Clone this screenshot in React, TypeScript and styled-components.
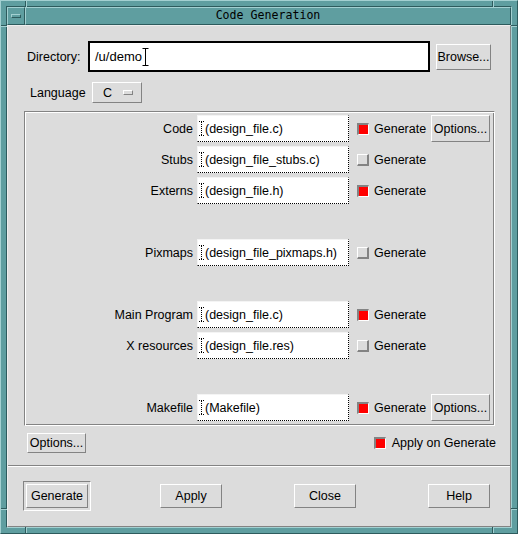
import styled, { createGlobalStyle, css } from "styled-components";

const TEAL = "#5f9ea0";
const TEAL_LIGHT = "#a3d0d1";
const TEAL_DARK = "#2d5b5d";
const FACE = "#dcdcdc";
const SHADE = "#838383";
const HILITE = "#ffffff";

const Global = createGlobalStyle`
  body {
    margin: 0;
    background: ${TEAL};
    font-family: "Liberation Sans", Arial, sans-serif;
    font-size: 12.5px;
    color: #000;
  }
`;

const raised = css`
  border-style: solid;
  border-width: 1px;
  border-color: ${HILITE} ${SHADE} ${SHADE} ${HILITE};
`;

const sunken = css`
  border-style: solid;
  border-width: 1px;
  border-color: ${SHADE} ${HILITE} ${HILITE} ${SHADE};
`;

/* ---------- window manager frame ---------- */

const Window = styled.div`
  position: relative;
  box-sizing: border-box;
  width: 518px;
  height: 534px;
  padding: 5px;
  background: ${TEAL};
  border: 1px solid;
  border-color: ${TEAL_LIGHT} ${TEAL_DARK} ${TEAL_DARK} ${TEAL_LIGHT};
  display: flex;
`;

const Inner = styled.div`
  flex: 1;
  display: flex;
  flex-direction: column;
  border: 1px solid;
  border-color: ${TEAL_DARK} ${TEAL_LIGHT} ${TEAL_LIGHT} ${TEAL_DARK};
`;

// resize-handle marks cut into the frame border
const Notch = styled.div<{ $side: "top" | "bottom" | "left" | "right"; $at: number }>`
  position: absolute;
  ${({ $side, $at }) =>
    $side === "top" || $side === "bottom"
      ? css`
          left: ${$at}px;
          ${$side}: 0;
          width: 2px;
          height: 6px;
          background: linear-gradient(to right, ${TEAL_DARK} 50%, ${TEAL_LIGHT} 50%);
        `
      : css`
          top: ${$at}px;
          ${$side}: 0;
          width: 6px;
          height: 2px;
          background: linear-gradient(to bottom, ${TEAL_DARK} 50%, ${TEAL_LIGHT} 50%);
        `}
`;

const TitleBar = styled.div`
  display: flex;
  height: 18px;
`;

const MenuButton = styled.div`
  box-sizing: border-box;
  width: 18px;
  border: 1px solid;
  border-color: ${TEAL_LIGHT} ${TEAL_DARK} ${TEAL_DARK} ${TEAL_LIGHT};
  display: flex;
  align-items: center;
  justify-content: center;
`;

const MenuBar = styled.div`
  box-sizing: border-box;
  width: 10px;
  height: 4px;
  margin-top: -1px;
  border: 1px solid;
  border-color: ${TEAL_LIGHT} ${TEAL_DARK} ${TEAL_DARK} ${TEAL_LIGHT};
`;

const Title = styled.div`
  flex: 1;
  box-sizing: border-box;
  border: 1px solid;
  border-color: ${TEAL_LIGHT} ${TEAL_DARK} ${TEAL_DARK} ${TEAL_LIGHT};
  display: flex;
  align-items: center;
  justify-content: center;
  font-family: "DejaVu Sans Mono", "Liberation Mono", monospace;
  font-size: 11.6px;
  line-height: 1;
`;

/* ---------- dialog body ---------- */

const Client = styled.div`
  flex: 1;
  display: flex;
  flex-direction: column;
  background: ${FACE};
  ${raised};
  border-color: #eeeeee ${SHADE} ${SHADE} #eeeeee;
`;

const Button = styled.button<{ $w: number; $h: number }>`
  box-sizing: border-box;
  width: ${({ $w }) => $w}px;
  height: ${({ $h }) => $h}px;
  padding: 0;
  margin: 0;
  background: ${FACE};
  ${raised};
  font: inherit;
  color: #000;
  display: flex;
  align-items: center;
  justify-content: center;
`;

const DirRow = styled.div`
  display: flex;
  align-items: center;
  height: 31px;
  margin-top: 15px;
  padding-left: 19px;
`;

const DirLabel = styled.span`
  width: 61px;
`;

const DirField = styled.div`
  box-sizing: border-box;
  width: 342px;
  height: 31px;
  margin-right: 6px;
  padding-left: 5px;
  background: #fff;
  border: 2px solid #000;
  display: flex;
  align-items: center;
  font-size: 13px;
`;

const LangRow = styled.div`
  display: flex;
  align-items: center;
  height: 21px;
  margin-top: 10px;
  padding-left: 22px;
`;

const LangLabel = styled.span`
  width: 62px;
`;

const OptionMenu = styled.div`
  box-sizing: border-box;
  width: 50px;
  height: 21px;
  padding-left: 10px;
  ${raised};
  display: flex;
  align-items: center;
  gap: 11px;
`;

const Indicator = styled.div`
  box-sizing: border-box;
  width: 10px;
  height: 5px;
  ${raised};
`;

const Frame = styled.div`
  box-sizing: border-box;
  width: 471px;
  height: 315px;
  margin: 8px 0 0 16px;
  padding: 3px 0 1px 0;
  border: 1px solid;
  border-color: ${SHADE} ${HILITE} ${HILITE} ${SHADE};
  box-shadow: inset 1px 1px 0 ${HILITE}, inset -1px -1px 0 ${SHADE};
  display: grid;
  grid-template-columns: 167px 152px 74px 59px;
  grid-template-rows: repeat(10, 27px);
  column-gap: 4px;
  row-gap: 4px;
  padding-left: 1px;
`;

const FileLabel = styled.span<{ $row: number }>`
  grid-column: 1;
  grid-row: ${({ $row }) => $row};
  align-self: center;
  justify-self: end;
`;

const FileField = styled.div<{ $row: number }>`
  grid-column: 2;
  grid-row: ${({ $row }) => $row};
  box-sizing: border-box;
  padding-left: 1px;
  background: #fff;
  border-style: solid dotted dotted solid;
  border-width: 1px;
  border-color: #f4f4f4 #000 #000 #f4f4f4;
  display: flex;
  align-items: center;
  gap: 0;
`;

const ToggleCell = styled.div<{ $row: number }>`
  grid-column: 3;
  grid-row: ${({ $row }) => $row};
  display: flex;
  align-items: center;
  gap: 5px;
  padding-left: 4px;
`;

const OptionsCell = styled.div<{ $row: number }>`
  grid-column: 4;
  grid-row: ${({ $row }) => $row};
`;

const Check = styled.span<{ $on: boolean }>`
  box-sizing: border-box;
  width: 12px;
  height: 12px;
  border-style: solid;
  border-width: 2px 1px 1px 2px;
  ${({ $on }) =>
    $on
      ? css`
          border-color: ${SHADE} ${HILITE} ${HILITE} ${SHADE};
          background: #ff0000;
        `
      : css`
          border-width: 1px 2px 2px 1px;
          border-color: ${HILITE} ${SHADE} ${SHADE} ${HILITE};
          background: ${FACE};
        `}
`;

const ExtraRow = styled.div`
  display: flex;
  align-items: center;
  justify-content: space-between;
  height: 20px;
  margin-top: 7px;
  padding: 0 14px 0 19px;
`;

const Toggle = styled.div`
  display: flex;
  align-items: center;
  gap: 6px;
`;

const Separator = styled.div`
  height: 0;
  margin-top: 12px;
  border-top: 1px solid ${SHADE};
  border-bottom: 1px solid ${HILITE};
`;

const ActionRow = styled.div`
  display: grid;
  grid-template-columns: repeat(4, 68px);
  column-gap: 66px;
  height: 30px;
  margin-top: 14px;
  padding-left: 15px;
`;

const Slot = styled.div`
  display: flex;
  align-items: center;
  justify-content: center;
`;

const DefaultRing = styled.div`
  box-sizing: border-box;
  width: 68px;
  height: 30px;
  ${sunken};
  display: flex;
  align-items: center;
  justify-content: center;
`;

const IdleCursor = () => (
  <svg width="6" height="15" viewBox="0 0 6 15" aria-hidden="true">
    <g stroke="#000" strokeWidth="1" strokeDasharray="1 1" fill="none">
      <path d="M0 0.5H5" />
      <path d="M2.5 1V14" />
      <path d="M0 14.5H5" />
    </g>
  </svg>
);

const ActiveCursor = () => (
  <svg width="7" height="18" viewBox="0 0 7 18" aria-hidden="true">
    <g stroke="#000" strokeWidth="1" fill="none">
      <path d="M0.5 0.5H6.5" />
      <path d="M3.5 1V17" />
      <path d="M0.5 17.5H6.5" />
    </g>
  </svg>
);

type FileRow = { label: string; value: string; on: boolean; row: number; options?: boolean };

const files: FileRow[] = [
  { label: "Code", value: "(design_file.c)", on: true, row: 1, options: true },
  { label: "Stubs", value: "(design_file_stubs.c)", on: false, row: 2 },
  { label: "Externs", value: "(design_file.h)", on: true, row: 3 },
  { label: "Pixmaps", value: "(design_file_pixmaps.h)", on: false, row: 5 },
  { label: "Main Program", value: "(design_file.c)", on: true, row: 7 },
  { label: "X resources", value: "(design_file.res)", on: false, row: 8 },
  { label: "Makefile", value: "(Makefile)", on: true, row: 10, options: true },
];

export default function App() {
  return (
    <>
      <Global />
      <Window>
        <Notch $side="top" $at={24} />
        <Notch $side="top" $at={491} />
        <Notch $side="bottom" $at={24} />
        <Notch $side="bottom" $at={491} />
        <Notch $side="left" $at={24} />
        <Notch $side="left" $at={507} />
        <Notch $side="right" $at={24} />
        <Notch $side="right" $at={507} />
        <Inner>
          <TitleBar>
            <MenuButton>
              <MenuBar />
            </MenuButton>
            <Title>Code Generation</Title>
          </TitleBar>
          <Client>
            <DirRow>
              <DirLabel>Directory:</DirLabel>
              <DirField>
                /u/demo
                <ActiveCursor />
              </DirField>
              <Button $w={55} $h={26}>Browse...</Button>
            </DirRow>

            <LangRow>
              <LangLabel>Language</LangLabel>
              <OptionMenu>
                <span>C</span>
                <Indicator />
              </OptionMenu>
            </LangRow>

            <Frame>
              {files.map((f) => (
                <FileGroup key={f.label} {...f} />
              ))}
            </Frame>

            <ExtraRow>
              <Button $w={59} $h={20}>Options...</Button>
              <Toggle>
                <Check $on />
                <span>Apply on Generate</span>
              </Toggle>
            </ExtraRow>

            <Separator />

            <ActionRow>
              <Slot>
                <DefaultRing>
                  <Button $w={62} $h={24}>Generate</Button>
                </DefaultRing>
              </Slot>
              <Slot>
                <Button $w={62} $h={24}>Apply</Button>
              </Slot>
              <Slot>
                <Button $w={62} $h={24}>Close</Button>
              </Slot>
              <Slot>
                <Button $w={62} $h={24}>Help</Button>
              </Slot>
            </ActionRow>
          </Client>
        </Inner>
      </Window>
    </>
  );
}

function FileGroup({ label, value, on, row, options }: FileRow) {
  return (
    <>
      <FileLabel $row={row}>{label}</FileLabel>
      <FileField $row={row}>
        <IdleCursor />
        <span>{value}</span>
      </FileField>
      <ToggleCell $row={row}>
        <Check $on={on} />
        <span>Generate</span>
      </ToggleCell>
      {options && (
        <OptionsCell $row={row}>
          <Button $w={59} $h={27}>Options...</Button>
        </OptionsCell>
      )}
    </>
  );
}
